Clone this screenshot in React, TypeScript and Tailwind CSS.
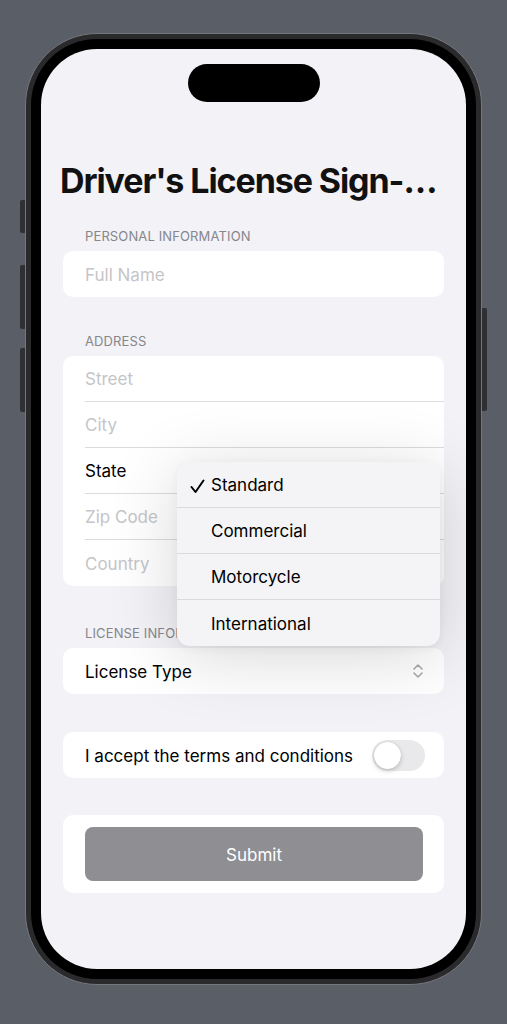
import React from "react";

const font = { fontFamily: "Inter, 'Noto Sans', 'Liberation Sans', sans-serif" };

function Row({ label, placeholder = true, last = false }: { label: string; placeholder?: boolean; last?: boolean }) {
  return (
    <div className={`ml-[22px] flex items-center pt-[3px] ${last ? "h-[46px]" : "h-[46px] border-b border-[#dcdcdf]"}`}>
      <span className={`text-[17px] ${placeholder ? "text-[#c5c5c8]" : "text-black"}`}>{label}</span>
    </div>
  );
}

function Header({ children, clip = false }: { children: React.ReactNode; clip?: boolean }) {
  return (
    <div className={`ml-[44px] h-4 text-[13px] leading-4 text-[#86868b] tracking-[0.01em] whitespace-nowrap ${clip ? "w-[92px] overflow-hidden" : ""}`}>
      {children}
    </div>
  );
}

export default function App() {
  return (
    <div className="min-h-[1024px] w-full bg-[#5a5e66] pl-[25px] pt-[33px]" style={font}>
      <div className="relative h-[952px] w-[457px]">
        {/* side buttons */}
        <div className="absolute left-[-5px] top-[167px] h-[33px] w-[5px] rounded-l-[2px] bg-[#2e3034]" />
        <div className="absolute left-[-5px] top-[232px] h-[64px] w-[5px] rounded-l-[2px] bg-[#2e3034]" />
        <div className="absolute left-[-5px] top-[315px] h-[64px] w-[5px] rounded-l-[2px] bg-[#2e3034]" />
        <div className="absolute right-[-5px] top-[275px] h-[103px] w-[5px] rounded-r-[2px] bg-[#2e3034]" />
        <div className="h-full w-full rounded-[72px] border border-[#75777c] bg-[#2a2a2c] p-[5px]">
          <div className="h-full w-full rounded-[66px] bg-black p-[10px]">
            <div className="relative flex h-full w-full flex-col overflow-hidden rounded-[56px] bg-[#f2f2f7]">
              <div className="mx-auto mt-[15px] h-[38px] w-[132px] shrink-0 rounded-full bg-black" />
              <div className="ml-[19px] mt-[58px] h-[41px] text-[34px] font-bold leading-[41px] tracking-[-0.032em] text-[#111] whitespace-nowrap">
                Driver's License Sign-…
              </div>

              <div className="mt-[27px]">
                <Header>PERSONAL INFORMATION</Header>
              </div>
              <div className="mx-[22px] mt-[7px] overflow-hidden rounded-[10px] bg-white">
                <Row label="Full Name" last />
              </div>

              <div className="mt-[36px]">
                <Header>ADDRESS</Header>
              </div>
              <div className="mx-[22px] mt-[7px] overflow-hidden rounded-[10px] bg-white">
                <Row label="Street" />
                <Row label="City" />
                <Row label="State" placeholder={false} />
                <Row label="Zip Code" />
                <Row label="Country" last />
              </div>

              <div className="mt-[39px]">
                <Header clip>LICENSE INFORMATION</Header>
              </div>
              <div className="mx-[22px] mt-[7px] flex h-[46px] items-center justify-between rounded-[10px] bg-white pl-[22px] pr-[20px]">
                <span className="pt-[3px] text-[17px] text-black">License Type</span>
                <svg width="12" height="18" viewBox="0 0 12 18" fill="none" stroke="#a9a9ae" strokeWidth="1.6" strokeLinecap="round" strokeLinejoin="round">
                  <path d="M2 7 L6 3 L10 7" />
                  <path d="M2 11 L6 15 L10 11" />
                </svg>
              </div>

              <div className="mx-[22px] mt-[38px] flex h-[46px] items-center justify-between rounded-[10px] bg-white pl-[22px] pr-[19px]">
                <span className="pt-[3px] text-[17px] text-black">I accept the terms and conditions</span>
                <div className="relative h-[31px] w-[53px] rounded-full bg-[#e9e9eb]">
                  <div className="absolute left-[2px] top-[2px] h-[27px] w-[27px] rounded-full bg-white shadow-[0_2px_5px_rgba(0,0,0,0.18),0_0_1px_rgba(0,0,0,0.2)]" />
                </div>
              </div>

              <div className="mx-[22px] mt-[37px] rounded-[10px] bg-white py-[12px] pl-[22px] pr-[21px]">
                <div className="flex h-[54px] items-center justify-center rounded-[8px] bg-[#8e8e93] pt-[3px] text-[17px] text-white">
                  Submit
                </div>
              </div>

              {/* dropdown menu */}
              <div className="absolute left-[136px] top-[413px] w-[263px] overflow-hidden rounded-[13px] bg-[#f4f4f6] shadow-[0_10px_70px_rgba(0,0,0,0.16),0_2px_10px_rgba(0,0,0,0.05)]">
                {["Standard", "Commercial", "Motorcycle", "International"].map((t, i) => (
                  <div key={t} className={`relative flex h-[46px] items-center pl-[34px] pt-[3px] ${i < 3 ? "border-b border-[#dadadd]" : ""}`}>
                    {i === 0 && (
                      <svg className="absolute left-[13px] top-[17px]" width="15" height="15" viewBox="0 0 15 15" fill="none" stroke="#000" strokeWidth="2" strokeLinecap="round" strokeLinejoin="round">
                        <path d="M1.5 8 L5.5 13 L13.5 1.5" />
                      </svg>
                    )}
                    <span className="text-[17px] text-black">{t}</span>
                  </div>
                ))}
              </div>
            </div>
          </div>
        </div>
      </div>
    </div>
  );
}
